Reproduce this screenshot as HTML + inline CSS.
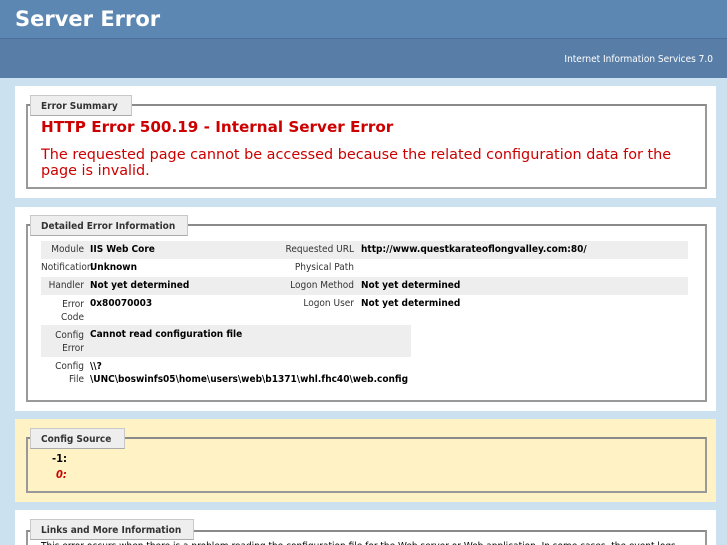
<!DOCTYPE html>
<html><head><meta charset="utf-8"><style>
*{margin:0;padding:0;box-sizing:border-box}
html,body{width:727px;height:545px;overflow:hidden}
body{background:#cbe1ef;font-family:"DejaVu Sans Condensed","DejaVu Sans","Liberation Sans",sans-serif;position:relative}
.a{position:absolute;white-space:nowrap}
#h1{left:0;top:0;width:727px;height:38px;background:#5c87b2}
#h2{left:0;top:38px;width:727px;height:40px;background:#587ea8;border-top:1px solid #4a6f98}
.panel{position:absolute;left:15px;width:701px;background:#fff}
.fs{position:absolute;left:26px;width:681px;border:2px solid #999;border-top-color:#8a8a8a}
.lg{position:absolute;left:30px;height:21px;background:#eeeeee;border:1px solid #c8c8c8;border-bottom-color:#aaa;font-weight:bold;font-size:10px;color:#333;padding:5px 0 0 10px}
.row{position:absolute;background:#eeeeee}
.l{font-size:10px;color:#333;text-align:right}
.v{font-size:10px;font-weight:bold;color:#000}
</style></head><body>
<div class="a" id="h1"></div>
<div class="a" style="left:15px;top:7px;color:#fff;font-family:'DejaVu Sans',sans-serif;font-weight:bold;font-size:21px">Server Error</div>
<div class="a" id="h2"></div>
<div class="a" style="right:14px;top:54px;color:#fff;font-size:10px">Internet Information Services 7.0</div>

<div class="panel" style="top:86px;height:112px"></div>
<div class="fs" style="top:104px;height:85px"></div>
<div class="lg" style="top:95px;width:102px">Error Summary</div>
<div class="a" style="left:41px;top:118px;color:#c00;font-family:'DejaVu Sans',sans-serif;font-weight:bold;font-size:15.2px">HTTP Error 500.19 - Internal Server Error</div>
<div class="a" style="left:41px;top:147px;color:#c00;font-family:'DejaVu Sans',sans-serif;font-size:14.4px;line-height:16px">The requested page cannot be accessed because the related configuration data for the<br>page is invalid.</div>

<div class="panel" style="top:207px;height:204px"></div>
<div class="fs" style="top:224px;height:178px"></div>
<div class="lg" style="top:215px;width:158px">Detailed Error Information</div>
<div class="row" style="left:41px;top:241px;width:647px;height:18px"></div>
<div class="row" style="left:41px;top:277px;width:647px;height:18px"></div>
<div class="row" style="left:41px;top:325px;width:370px;height:32px"></div>
<div class="a l" style="right:643px;top:244px">Module</div><div class="a v" style="left:90px;top:244px">IIS Web Core</div>
<div class="a l" style="right:373px;top:244px">Requested URL</div><div class="a v" style="left:361px;top:244px">http://www.questkarateoflongvalley.com:80/</div>
<div class="a l" style="left:41px;top:262px">Notification</div><div class="a v" style="left:90px;top:262px">Unknown</div>
<div class="a l" style="right:373px;top:262px">Physical Path</div>
<div class="a l" style="right:643px;top:280px">Handler</div><div class="a v" style="left:90px;top:280px">Not yet determined</div>
<div class="a l" style="right:373px;top:280px">Logon Method</div><div class="a v" style="left:361px;top:280px">Not yet determined</div>
<div class="a l" style="right:643px;top:298px;line-height:13px">Error<br>Code</div><div class="a v" style="left:90px;top:298px">0x80070003</div>
<div class="a l" style="right:373px;top:298px">Logon User</div><div class="a v" style="left:361px;top:298px">Not yet determined</div>
<div class="a l" style="right:643px;top:329px;line-height:13px">Config<br>Error</div><div class="a v" style="left:90px;top:329px">Cannot read configuration file</div>
<div class="a l" style="right:643px;top:360px;line-height:13px">Config<br>File</div><div class="a v" style="left:90px;top:360px;line-height:13px">\\?<br>\UNC\boswinfs05\home\users\web\b1371\whl.fhc40\web.config</div>

<div class="panel" style="top:419px;height:83px;background:#fff3c6"></div>
<div class="fs" style="top:437px;height:56px"></div>
<div class="lg" style="top:428px;width:95px">Config Source</div>
<div class="a v" style="left:52px;top:452px;font-size:11px">-1:</div>
<div class="a" style="left:56px;top:468px;font-size:11px;font-weight:bold;font-style:italic;color:#c00">0:</div>

<div class="panel" style="top:510px;height:40px"></div>
<div class="fs" style="top:530px;height:30px"></div>
<div class="lg" style="top:519px;width:164px">Links and More Information</div>
<div class="a" style="left:41px;top:541px;font-size:10px;color:#000">This error occurs when there is a problem reading the configuration file for the Web server or Web application. In some cases, the event logs</div>
</body></html>
